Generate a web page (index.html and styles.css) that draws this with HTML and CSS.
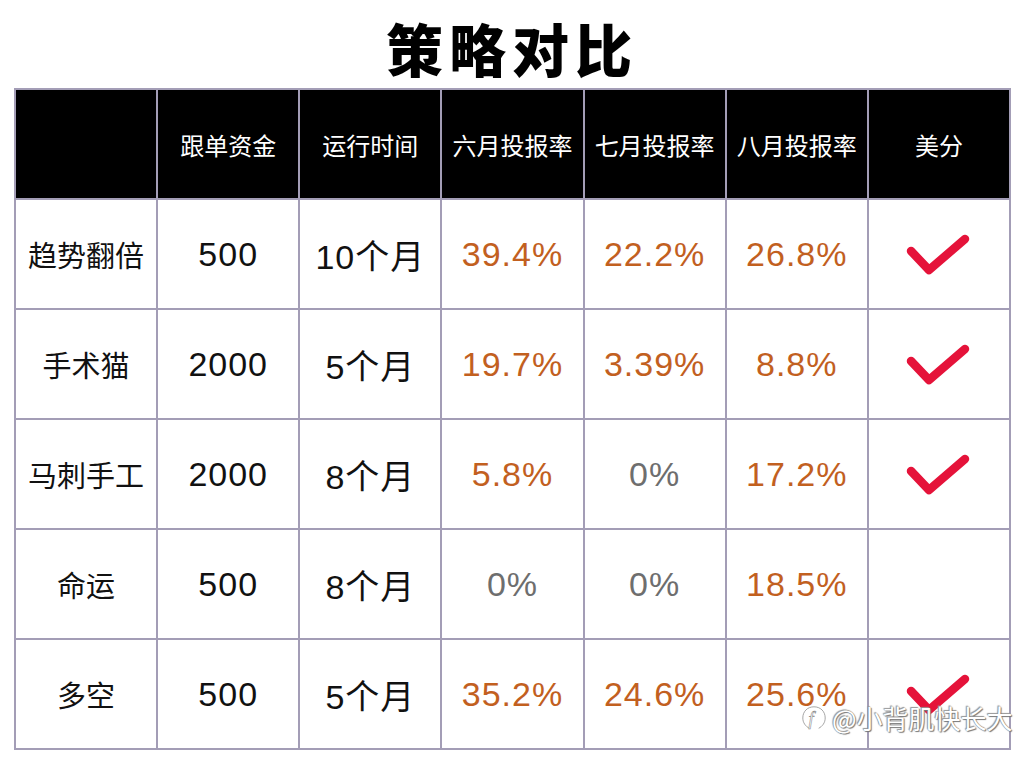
FILE: index.html
```html
<!DOCTYPE html>
<html lang="zh">
<head>
<meta charset="utf-8">
<link rel="stylesheet" href="styles.css">
</head>
<body>
<div class="page">
  <h1 class="title">策略对比</h1>
  <table class="cmp">
    <thead>
      <tr>
        <th></th><th>跟单资金</th><th>运行时间</th><th>六月投报率</th><th>七月投报率</th><th>八月投报率</th><th>美分</th>
      </tr>
    </thead>
    <tbody>
      <tr>
        <td class="name">趋势翻倍</td><td class="num">500</td><td class="num">10个月</td>
        <td class="pct">39.4%</td><td class="pct">22.2%</td><td class="pct">26.8%</td>
        <td class="chk"><svg viewBox="0 0 70 50" width="70" height="50"><polyline points="7,20 25,39 61,8" fill="none" stroke="#e5133a" stroke-width="8.5" stroke-linecap="round" stroke-linejoin="round"/></svg></td>
      </tr>
      <tr>
        <td class="name">手术猫</td><td class="num">2000</td><td class="num">5个月</td>
        <td class="pct">19.7%</td><td class="pct">3.39%</td><td class="pct">8.8%</td>
        <td class="chk"><svg viewBox="0 0 70 50" width="70" height="50"><polyline points="7,20 25,39 61,8" fill="none" stroke="#e5133a" stroke-width="8.5" stroke-linecap="round" stroke-linejoin="round"/></svg></td>
      </tr>
      <tr>
        <td class="name">马刺手工</td><td class="num">2000</td><td class="num">8个月</td>
        <td class="pct">5.8%</td><td class="zero">0%</td><td class="pct">17.2%</td>
        <td class="chk"><svg viewBox="0 0 70 50" width="70" height="50"><polyline points="7,20 25,39 61,8" fill="none" stroke="#e5133a" stroke-width="8.5" stroke-linecap="round" stroke-linejoin="round"/></svg></td>
      </tr>
      <tr>
        <td class="name">命运</td><td class="num">500</td><td class="num">8个月</td>
        <td class="zero">0%</td><td class="zero">0%</td><td class="pct">18.5%</td>
        <td class="chk"></td>
      </tr>
      <tr>
        <td class="name">多空</td><td class="num">500</td><td class="num">5个月</td>
        <td class="pct">35.2%</td><td class="pct">24.6%</td><td class="pct">25.6%</td>
        <td class="chk"><svg viewBox="0 0 70 50" width="70" height="50"><polyline points="7,20 25,39 61,8" fill="none" stroke="#e5133a" stroke-width="8.5" stroke-linecap="round" stroke-linejoin="round"/></svg></td>
      </tr>
    </tbody>
  </table>
  <div class="watermark">
    <svg class="wm-logo" viewBox="0 0 30 30" width="28" height="28"><path d="M10 26 C6 24 3 20 3 15 C3 8 8 3 15 3 C22 3 27 8 27 15 C27 20 24 24 20 26" fill="none" stroke="#fff" stroke-width="2.2"/><path d="M10 26 C6 24 3 20 3 15 C3 8 8 3 15 3 C22 3 27 8 27 15 C27 20 24 24 20 26" fill="none" stroke="#888" stroke-width="0.8"/><text x="9" y="22" font-family="Liberation Serif, serif" font-style="italic" font-size="20" fill="#fff" stroke="#888" stroke-width="0.6">f</text></svg>
    <span class="wm-text">@小背肌快长大</span>
  </div>
</div>
</body>
</html>
```

FILE: styles.css
```css
html, body {
  margin: 0;
  padding: 0;
  background: #ffffff;
}
.page {
  position: relative;
  width: 1024px;
  height: 768px;
  font-family: "Liberation Sans", "Noto Sans CJK SC", sans-serif;
}
.title {
  margin: 0;
  height: 88px;
  display: flex;
  align-items: center;
  justify-content: center;
  padding-top: 5px;
  box-sizing: border-box;
  font-family: "Noto Sans CJK SC", sans-serif;
  font-weight: 900;
  font-size: 57px;
  letter-spacing: 6px;
  color: #000;
}
.cmp {
  margin-left: 14px;
  width: 997px;
  border-collapse: collapse;
  table-layout: fixed;
}
.cmp th, .cmp td {
  border: 2px solid #a39db6;
  text-align: center;
  vertical-align: middle;
  padding: 0;
}
.cmp th {
  background: #000;
  color: #fff;
  height: 108px;
  font-family: "Noto Sans CJK SC", sans-serif;
  font-weight: 400;
  font-size: 24px;
}
.cmp td {
  height: 108px;
  font-size: 34px;
  letter-spacing: 1px;
  color: #111;
}
.cmp td.name {
  font-family: "Noto Sans CJK SC", sans-serif;
  font-size: 29px;
  letter-spacing: 0;
}
.cmp td.num {
  font-family: "Liberation Sans", "Noto Sans CJK SC", sans-serif;
}
.cmp td.pct {
  color: #c2601f;
}
.cmp td.zero {
  color: #6e6e6e;
}
.cmp td.chk svg {
  display: block;
  margin: 0 auto;
  position: relative;
  top: 2px;
}
.watermark {
  position: absolute;
  left: 800px;
  top: 699px;
  display: flex;
  align-items: center;
  gap: 4px;
}
.wm-text {
  font-family: "Noto Sans CJK SC", sans-serif;
  font-size: 26px;
  color: #fff;
  text-shadow: 0 0 1px #777, 1px 1px 1px #777, -1px -1px 1px #999;
}
```
